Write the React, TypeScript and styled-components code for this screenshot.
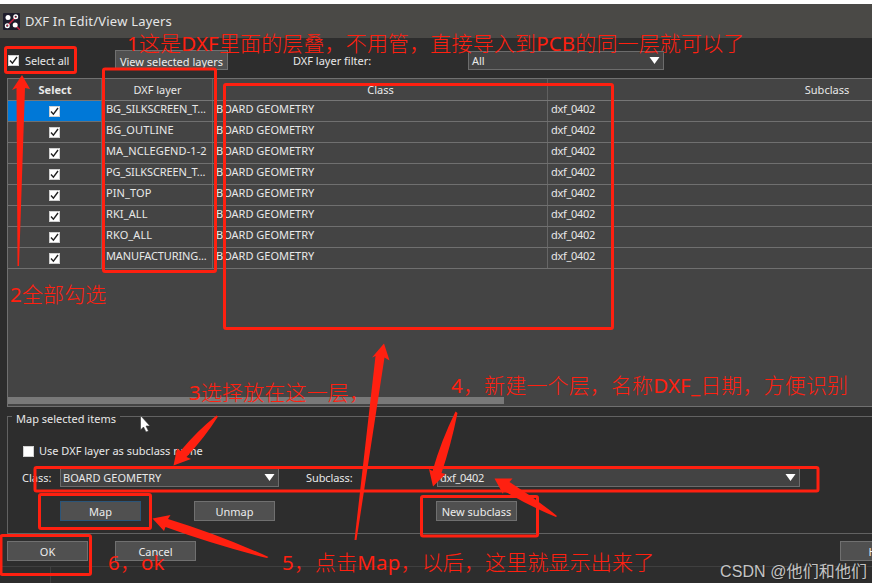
import React from "react";
import styled, { createGlobalStyle, css } from "styled-components";

const UI_FONT = '"Noto Sans", "Open Sans", sans-serif';
const NOTE_FONT = '"Noto Sans", "Noto Sans CJK SC", sans-serif';
const RED = "#ff2010";

const GlobalStyle = createGlobalStyle`
  * { box-sizing: border-box; }
  html, body { margin: 0; padding: 0; background: #fff; overflow: hidden; }
`;

const Screen = styled.div`
  position: relative;
  width: 872px;
  height: 587px;
  padding: 4px 0;
  overflow: hidden;
  background: #fff;
  font: 11px/14px ${UI_FONT};
  color: #e8e8e8;
`;

const Dialog = styled.main`
  display: flex;
  flex-direction: column;
  height: 579px;
  background: #2d2d2d;
  overflow: hidden;
`;

const TitleBar = styled.header`
  display: flex;
  align-items: center;
  flex: none;
  height: 34px;
  padding: 0 0 0 3px;
  gap: 5px;
  background: #4a4946;
  font-size: 13px;
  line-height: 18px;
  letter-spacing: 0.2px;
  color: #e6e6e6;
`;

const Toolbar = styled.div`
  display: flex;
  flex: none;
  align-items: center;
  height: 40px;
  padding: 4px 0 0 8px;
`;

const Label = styled.span<{ $w?: number; $ls?: number; $ml?: number; $drop?: number }>`
  flex: none;
  white-space: nowrap;
  letter-spacing: ${(p) => p.$ls ?? 0}px;
  margin-left: ${(p) => p.$ml ?? 0}px;
  padding-top: ${(p) => p.$drop ?? 0}px;
  ${(p) => p.$w && css`width: ${p.$w}px;`}
`;

const Check = styled.span`
  display: flex;
  flex: none;
  width: 11px;
  height: 11px;
  border: 1px solid #d0d0d0;
  background: #fff;
`;

const Button = styled.button<{ $w: number; $ml?: number; $focus?: boolean; $drop?: number }>`
  flex: none;
  width: ${(p) => p.$w}px;
  height: 20px;
  margin: 0 0 0 ${(p) => p.$ml ?? 0}px;
  padding: ${(p) => p.$drop ?? 2}px 0 0;
  border: 1px solid ${(p) => (p.$focus ? "#2b5579" : "#707070")};
  background: #505050;
  color: #ececec;
  font: 11px/14px ${UI_FONT};
  text-align: center;
  white-space: nowrap;
  overflow: hidden;
`;

const Combo = styled.div<{ $w: number; $ml?: number }>`
  display: flex;
  flex: none;
  justify-content: space-between;
  align-items: center;
  width: ${(p) => p.$w}px;
  height: 19px;
  margin-left: ${(p) => p.$ml ?? 0}px;
  padding: 0 3px 0 2px;
  border: 1px solid #6c6c6c;
  background: #434343;
`;

const TablePanel = styled.section`
  display: flex;
  flex-direction: column;
  flex: none;
  height: 329px;
  margin-left: 7px;
  border: solid #707070;
  border-width: 1px 0 1px 1px;
  background: #444;
  overflow: hidden;
`;

const columns = "94px 111px 335px 558px";

const HeadRow = styled.div`
  display: grid;
  flex: none;
  grid-template-columns: ${columns};
  height: 22px;
  border-bottom: 1px solid #767676;
`;

const HeadCell = styled.div<{ $bold?: boolean }>`
  display: flex;
  align-items: center;
  justify-content: center;
  padding: 1px 0 0 1px;
  border-right: 1px solid #606060;
  font-weight: ${(p) => (p.$bold ? 700 : 400)};
`;

const Row = styled.div`
  display: grid;
  flex: none;
  grid-template-columns: ${columns};
  height: 21px;
  border-bottom: 1px solid #707070;
`;

const Cell = styled.div<{ $center?: boolean; $active?: boolean; $pl?: number; $ls?: number }>`
  display: flex;
  align-items: flex-start;
  justify-content: ${(p) => (p.$center ? "center" : "flex-start")};
  padding: ${(p) => (p.$center ? 5 : 1)}px 0 0 ${(p) => p.$pl ?? 0}px;
  border-right: 1px solid #666;
  background: ${(p) => (p.$active ? "#0078d7" : "transparent")};
  letter-spacing: ${(p) => p.$ls ?? 0}px;
  white-space: nowrap;
`;

const ScrollTrack = styled.div`
  display: flex;
  flex: none;
  height: 9px;
  margin-top: auto;
`;
const ScrollThumb = styled.div`
  width: 496px;
  height: 7px;
  background: #797979;
`;

const Group = styled.fieldset`
  display: flex;
  flex-direction: column;
  flex: none;
  min-width: 0;
  width: 880px;
  height: 128px;
  margin: -1px 0 0 7px;
  padding: 0 0 0 14px;
  border: 1px solid #626262;
`;
const Legend = styled.legend`
  height: 20px;
  margin-left: -10px;
  padding: 6px 4px 0;
`;
const GroupLine = styled.div<{ $h: number; $mt: number; $pl?: number }>`
  display: flex;
  flex: none;
  align-items: center;
  height: ${(p) => p.$h}px;
  margin-top: ${(p) => p.$mt}px;
  padding-left: ${(p) => p.$pl ?? 0}px;
`;

const Footer = styled.footer`
  display: flex;
  flex: none;
  height: 33px;
  padding: 7px 0 0 7px;
  border-bottom: 1px solid #3f3f3f;
`;
const StatusBar = styled.div`
  display: flex;
  flex: 1;
  width: 51px;
  border-right: 1px solid #3f3f3f;
`;

const MarkLayer = styled.svg`
  position: absolute;
  left: 0;
  top: 0;
`;

const Note = styled.div<{ $x: number; $y: number }>`
  position: absolute;
  left: ${(p) => p.$x}px;
  top: ${(p) => p.$y}px;
  color: ${RED};
  font: 300 21px/28px ${NOTE_FONT};
  letter-spacing: 0.15px;
  white-space: nowrap;
`;

const Latin = styled.span`
  font-weight: 400;
  font-size: 20.5px;
`;

const Watermark = styled.div`
  position: absolute;
  left: 720px;
  top: 561px;
  color: #c4c4c4;
  font: 16px/22px "Liberation Sans", "Noto Sans CJK SC", sans-serif;
  letter-spacing: 0.1px;
  text-shadow: 1px 1px 1px #222;
  white-space: nowrap;
`;

const AppIcon = () => (
  <svg width="17" height="17" viewBox="0 0 17 17">
    <rect width="17" height="17" rx="1" fill="#1d1c2b" />
    <path d="M4 13 L13 4 M12 12 L17 17" stroke="#c5203f" strokeWidth="1.5" />
    <circle cx="5" cy="4.500" r="2.500" fill="#fff" />
    <circle cx="12.200" cy="12" r="2.500" fill="#fff" />
    <circle cx="12.700" cy="3.800" r="1.800" fill="none" stroke="#fff" strokeWidth="1.400" />
    <circle cx="4.300" cy="12.700" r="1.800" fill="none" stroke="#fff" strokeWidth="1.400" />
  </svg>
);

const Tick = () => (
  <svg width="9" height="9" viewBox="0 0 9 9">
    <path d="M1 4.500 L3.400 7.200 L8 1" fill="none" stroke="#222" strokeWidth="1.400" />
  </svg>
);

const Arrow = () => (
  <svg width="11" height="9" viewBox="0 0 11 9">
    <path d="M0.500 1 H10.500 L5.500 8 Z" fill="#fff" />
  </svg>
);

const layers = [
  "BG_SILKSCREEN_T...",
  "BG_OUTLINE",
  "MA_NCLEGEND-1-2",
  "PG_SILKSCREEN_T...",
  "PIN_TOP",
  "RKI_ALL",
  "RKO_ALL",
  "MANUFACTURING...",
];

const frames = [
  [5.5, 47.5, 70, 25],
  [103.5, 69, 112, 202.5],
  [224.5, 84.5, 388, 244],
  [35, 467.5, 783, 23.5],
  [39.5, 494.5, 111, 34],
  [421.5, 496.5, 116, 39.5],
  [1, 535.5, 89.5, 39],
];

const arrows = [
  "M22 75 L30 89 L25 88 L19 266 L17.500 266 L16.500 88 L12 90 Z",
  "M173.500 465.500 L177 448.500 L180.500 451 Q197 431 216.500 415.500 L218 416.500 Q205 437 186.500 457 L191 459 Z",
  "M384 343.500 L389.500 360.500 L384.500 357.500 L356.500 540 L354.500 540 L375.500 356 L372 357.500 Z",
  "M433 486.500 L429 469 L432.500 471 Q441 441 455.500 411.500 L457.500 413 Q451 445 441.500 473 L445.500 474 Z",
  "M494.500 478.500 L512.500 478.500 L509.500 482 Q535 498 557 516 L556 517 Q529 506 503.500 490.500 L503 494 Z",
  "M152.500 518.500 L170.500 515 L168 519 Q220 535 268.500 557 L267 558 Q215 545 165.500 527 L164 531 Z",
];

export default function App() {
  return (
    <Screen>
      <GlobalStyle />
      <Dialog>
        <TitleBar>
          <AppIcon />
          <span>DXF In Edit/View Layers</span>
        </TitleBar>
        <Toolbar>
          <Check><Tick /></Check>
          <Label $ml={6} $w={90} $drop={2} $ls={-0.1}>Select all</Label>
          <Button $w={113} $drop={3}>View selected layers</Button>
          <Label $ml={65} $w={175} $drop={2}>DXF layer filter:</Label>
          <Combo $w={196}><Label $ml={1} $drop={2}>All</Label><Arrow /></Combo>
        </Toolbar>
        <TablePanel>
          <HeadRow>
            <HeadCell $bold>Select</HeadCell>
            <HeadCell>DXF layer</HeadCell>
            <HeadCell>Class</HeadCell>
            <HeadCell>Subclass</HeadCell>
          </HeadRow>
          {layers.map((name, i) => (
            <Row key={name}>
              <Cell $center $active={i === 0}><Check><Tick /></Check></Cell>
              <Cell $pl={4} $ls={name.endsWith("...") ? -0.12 : 0.1}>{name}</Cell>
              <Cell $pl={3}>BOARD GEOMETRY</Cell>
              <Cell $pl={3} $ls={-0.3}>dxf_0402</Cell>
            </Row>
          ))}
          <ScrollTrack><ScrollThumb /></ScrollTrack>
        </TablePanel>
        <Group>
          <Legend>Map selected items</Legend>
          <GroupLine $h={14} $mt={18} $pl={1}>
            <Check />
            <Label $ml={5}>Use DXF layer as subclass name</Label>
          </GroupLine>
          <GroupLine $h={19} $mt={10}>
            <Label $w={38}>Class:</Label>
            <Combo $w={219}><Label>BOARD GEOMETRY</Label><Arrow /></Combo>
            <Label $ml={27} $w={131} $ls={-0.1}>Subclass:</Label>
            <Combo $w={363}><Label $ls={-0.3}>dxf_0402</Label><Arrow /></Combo>
          </GroupLine>
          <GroupLine $h={20} $mt={14} $pl={38}>
            <Button $w={81} $focus>Map</Button>
            <Button $w={81} $ml={53}>Unmap</Button>
            <Button $w={81} $ml={161}>New subclass</Button>
          </GroupLine>
        </Group>
        <Footer>
          <Button $w={81}>OK</Button>
          <Button $w={81} $ml={27}>Cancel</Button>
          <Button $w={81} $ml={644}>Help</Button>
        </Footer>
        <StatusBar />
      </Dialog>

      <MarkLayer width="872" height="587" viewBox="0 0 872 587">
        <g fill="none" stroke={RED} strokeWidth="3">
          {frames.map(([x, y, w, h]) => (
            <rect key={`${x}-${y}`} x={x} y={y} width={w} height={h} rx="1.5" />
          ))}
        </g>
        {arrows.map((d) => <path key={d} d={d} fill={RED} />)}
        <path d="M140.500 415.500 V430 L143.500 427 L146 432 L148.500 431 L146 426 H150 Z" fill="#fff" stroke="#333" strokeWidth="0.6" />
      </MarkLayer>

      <Note $x={127} $y={29}>
        <Latin>1</Latin>这是<Latin>DXF</Latin>里面的层叠，不用管，直接导入到<Latin>PCB</Latin>的同一层就可以了
      </Note>
      <Note $x={10} $y={280}><Latin>2</Latin>全部勾选</Note>
      <Note $x={189} $y={378}><Latin>3</Latin>选择放在这一层，</Note>
      <Note $x={451} $y={371}>
        <Latin>4</Latin>，新建一个层，名称<Latin>DXF_</Latin>日期，方便识别
      </Note>
      <Note $x={282} $y={548}>
        <Latin>5</Latin>，点击<Latin>Map</Latin>，以后，这里就显示出来了
      </Note>
      <Note $x={108} $y={548}><Latin>6</Latin>，<Latin>ok</Latin></Note>
      <Watermark>CSDN @他们和他们</Watermark>
    </Screen>
  );
}
